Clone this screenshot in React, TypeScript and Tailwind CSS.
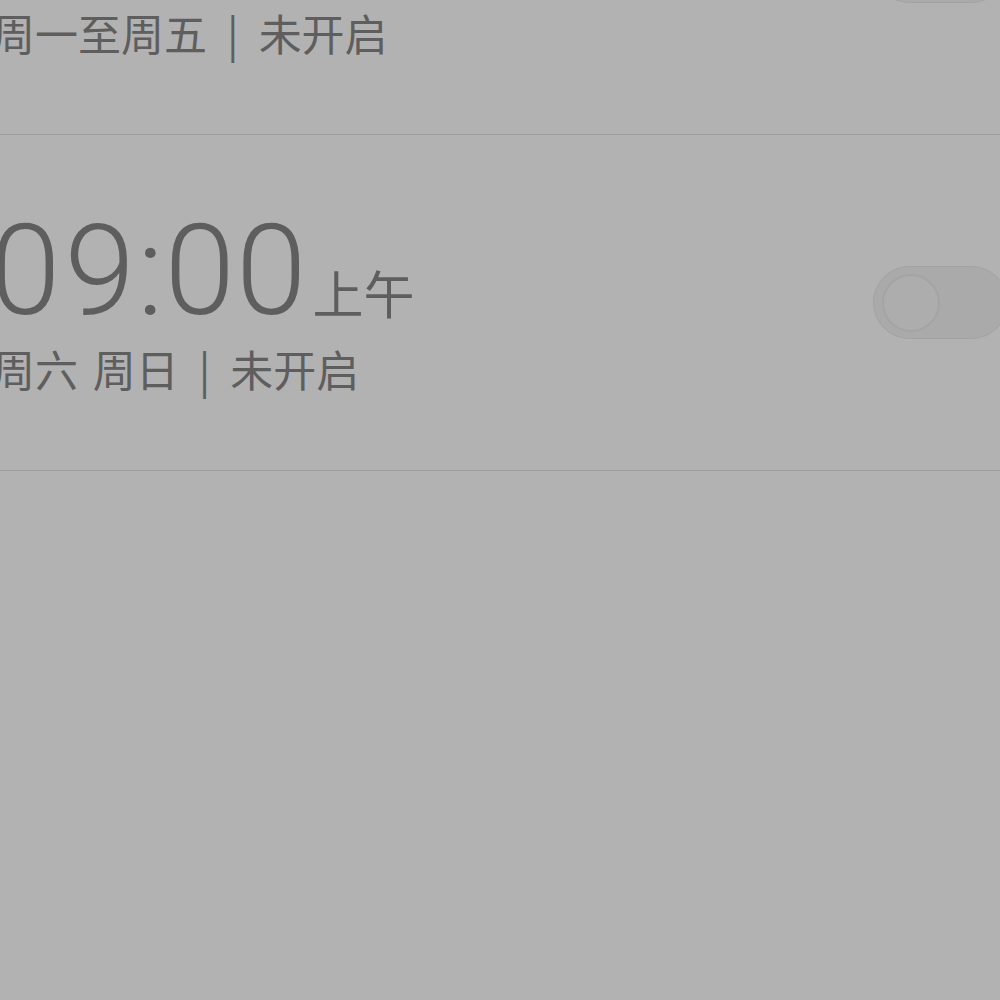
import React from 'react';

type Alarm = {
  hours: string;
  minutes: string;
  period: string;
  days: string;
  status: string;
};

const alarms: Alarm[] = [
  { hours: '07', minutes: '30', period: '上午', days: '周一至周五', status: '未开启' },
  { hours: '09', minutes: '00', period: '上午', days: '周六 周日', status: '未开启' },
];

const cjk = { fontFamily: '"Noto Sans CJK SC", "Noto Sans", sans-serif' };
const digits = { fontFamily: 'Roboto, "Noto Sans", sans-serif' };

const Toggle: React.FC = () => (
  <div className="w-[135px] h-[73px] shrink-0 rounded-full bg-[#aaaaaa] border border-[#a2a2a2] flex items-center pl-[8px]">
    <div className="w-[58px] h-[58px] rounded-full bg-[#adadad] border-2 border-[#a4a4a4]" />
  </div>
);

const AlarmRow: React.FC<{ alarm: Alarm }> = ({ alarm }) => (
  <div className="h-[336px] border-b border-[#9c9c9c] flex items-center justify-between">
    <div className="self-start flex flex-col pt-[72px] text-[#5e5e5e]">
      <div className="flex items-baseline">
        <span className="text-[127px] leading-none font-light tracking-[4px] -ml-[2px]" style={digits}>
          {alarm.hours}
        </span>
        <span className="text-[127px] leading-none font-light ml-[-2px]" style={digits}>
          :
        </span>
        <span className="text-[127px] leading-none font-light tracking-[1px] ml-[1px]" style={digits}>
          {alarm.minutes}
        </span>
        <span className="text-[51px] leading-none ml-[5px]" style={cjk}>
          {alarm.period}
        </span>
      </div>
      <div className="flex items-center text-[43px] leading-none mt-[13px]" style={cjk}>
        <span className="[word-spacing:5px]">{alarm.days}</span>
        <span className="mx-[20px]">|</span>
        <span>{alarm.status}</span>
      </div>
    </div>
    <Toggle />
  </div>
);

const App: React.FC = () => {
  return (
    <div className="w-[1000px] h-[1000px] overflow-hidden bg-[#b2b2b2]">
      <div className="-mt-[201px] -ml-[8px] w-[1016px]">
        {alarms.map((alarm, i) => (
          <AlarmRow key={i} alarm={alarm} />
        ))}
      </div>
    </div>
  );
};

export default App;
